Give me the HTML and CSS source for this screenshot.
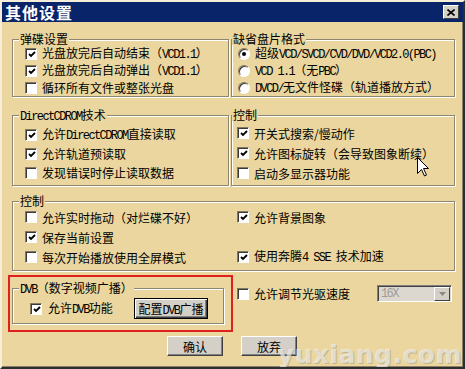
FILE: index.html
```html
<!DOCTYPE html>
<html lang="zh-CN">
<head>
  <meta charset="UTF-8">
  <title>其他设置</title>
  <link rel="stylesheet" href="styles.css">
</head>
<body>

<div class="window">
  <div class="titlebar">
    <span class="title">其他设置</span>
    <span class="close">
      <svg width="8" height="7" viewBox="0 0 8 7"><path d="M0.5 0.5 L7.5 6.5 M7.5 0.5 L0.5 6.5" stroke="#000" stroke-width="1.6"/></svg>
    </span>
  </div>

  <div class="content">
    <div class="pair">
      <fieldset class="group">
        <legend>弹碟设置</legend>
        <div class="items r17">
          <label class="item"><span class="cb on"><svg viewBox="0 0 8 7"><path d="M1 3 L3 5 L7 1"/></svg></span><span>光盘放完后自动结束（<span class="en">VCD1.1</span>）</span></label>
          <label class="item"><span class="cb on"><svg viewBox="0 0 8 7"><path d="M1 3 L3 5 L7 1"/></svg></span><span>光盘放完后自动弹出（<span class="en">VCD1.1</span>）</span></label>
          <label class="item"><span class="cb"></span><span>循环所有文件或整张光盘</span></label>
        </div>
      </fieldset>
      <fieldset class="group flush">
        <legend>缺省盘片格式</legend>
        <div class="items r17 right">
          <label class="item"><span class="rb on"></span><span>超级<span class="en">VCD/SVCD/CVD/DVD/VCD2.0(PBC)</span></span></label>
          <label class="item"><span class="rb"></span><span><span class="en">VCD 1.1</span>（无<span class="en">PBC</span>）</span></label>
          <label class="item"><span class="rb"></span><span><span class="en">DVCD/</span>无文件怪碟（轨道播放方式）</span></label>
        </div>
      </fieldset>
    </div>

    <div class="pair second">
      <fieldset class="group">
        <legend><span class="en">DirectCDROM</span>技术</legend>
        <div class="items r19">
          <label class="item"><span class="cb on"><svg viewBox="0 0 8 7"><path d="M1 3 L3 5 L7 1"/></svg></span><span>允许<span class="en">DirectCDROM</span>直接读取</span></label>
          <label class="item"><span class="cb on"><svg viewBox="0 0 8 7"><path d="M1 3 L3 5 L7 1"/></svg></span><span>允许轨道预读取</span></label>
          <label class="item"><span class="cb"></span><span>发现错误时停止读取数据</span></label>
        </div>
      </fieldset>
      <fieldset class="group flush">
        <legend>控制</legend>
        <div class="items r20 right">
          <label class="item"><span class="cb on"><svg viewBox="0 0 8 7"><path d="M1 3 L3 5 L7 1"/></svg></span><span>开关式搜索/慢动作</span></label>
          <label class="item"><span class="cb on"><svg viewBox="0 0 8 7"><path d="M1 3 L3 5 L7 1"/></svg></span><span>允许图标旋转（会导致图象断续）</span></label>
          <label class="item"><span class="cb"></span><span>启动多显示器功能</span></label>
        </div>
      </fieldset>
    </div>

    <fieldset class="group wide">
      <legend>控制</legend>
      <div class="items grid2">
        <label class="item"><span class="cb"></span><span>允许实时拖动（对烂碟不好）</span></label>
        <label class="item"><span class="cb on"><svg viewBox="0 0 8 7"><path d="M1 3 L3 5 L7 1"/></svg></span><span>允许背景图象</span></label>
        <label class="item"><span class="cb on"><svg viewBox="0 0 8 7"><path d="M1 3 L3 5 L7 1"/></svg></span><span>保存当前设置</span></label>
        <div class="item"></div>
        <label class="item"><span class="cb"></span><span>每次开始播放使用全屏模式</span></label>
        <label class="item"><span class="cb on"><svg viewBox="0 0 8 7"><path d="M1 3 L3 5 L7 1"/></svg></span><span>使用奔腾<span class="en">4 SSE </span>技术加速</span></label>
      </div>
    </fieldset>

    <div class="bottom">
      <div class="redbox">
        <fieldset class="group dvb">
          <legend><span class="en">DVB</span>（数字视频广播）</legend>
          <div class="dvb-row">
            <label class="item"><span class="cb on"><svg viewBox="0 0 8 7"><path d="M1 3 L3 5 L7 1"/></svg></span><span>允许<span class="en">DVB</span>功能</span></label>
            <button class="btn default">配置<span class="en">DVB</span>广播</button>
          </div>
        </fieldset>
      </div>
      <div class="speed">
        <label class="item"><span class="cb"></span><span>允许调节光驱速度</span></label>
        <div class="combo">
          <span class="combo-text en">16X</span>
          <span class="combo-btn">
            <svg width="7" height="4" viewBox="0 0 7 4"><path d="M0 0 H7 L3.5 4 Z" fill="#8c8880"/></svg>
          </span>
        </div>
      </div>
    </div>

    <div class="actions">
      <button class="btn">确认</button>
      <button class="btn">放弃</button>
    </div>
  </div>

  <svg class="cursor" width="13" height="21" viewBox="0 0 13 21">
    <path d="M0.5 0.5 V16.5 L4.5 12.5 L7.5 19 L9.5 18 L6.5 11.5 H11.5 Z" fill="#fff" stroke="#000" stroke-width="1"/>
  </svg>
  <div class="watermark">yuxiang.com</div>
</div>

</body>
</html>
```

FILE: styles.css
```css
body {
  margin: 0;
  background: #ead69e;
  font-family: "Noto Sans CJK SC", sans-serif;
  font-size: 12px;
  color: #000;
}
.window {
  position: relative;
  width: 465px;
  height: 369px;
  box-sizing: border-box;
  border: 2px solid;
  border-color: #f6eed8 #2e2e2e #2e2e2e #f6eed8;
  box-shadow: inset -1px -1px 0 #8c8068;
  background: #ead69e;
  overflow: hidden;
}
.titlebar {
  height: 20px;
  background: #0a246a;
  display: flex;
  align-items: center;
  justify-content: space-between;
  padding: 0 4px 0 3px;
}
.title {
  color: #fff;
  font-weight: bold;
  font-size: 16px;
  letter-spacing: 1px;
  line-height: 20px;
}
.close {
  width: 16px;
  height: 14px;
  box-sizing: border-box;
  background: #d4d0c8;
  border: 1px solid;
  border-color: #fff #404040 #404040 #fff;
  display: flex;
  align-items: center;
  justify-content: center;
}
.content {
  padding: 11px 8px 0 10px;
}
.en {
  font-family: "Liberation Mono", monospace;
  font-size: 12px;
  letter-spacing: -1.6px;
}

/* group boxes */
.pair {
  display: grid;
  grid-template-columns: 217px 224px;
  column-gap: 2px;
}
.pair.second {
  margin-top: 12px;
}
.group {
  margin: 0;
  padding: 0;
  min-width: 0;
  border: 1px solid #8f8672;
  box-shadow: inset 1px 1px 0 #fff, 1px 1px 0 #fff;
}
.group legend {
  padding: 0 1px;
  margin-left: 6px;
  height: 12px;
  line-height: 12px;
  background: #ead69e;
}
.group.flush legend {
  margin-left: 0;
}
.group.wide {
  margin-top: 9px;
}
.items {
  padding-left: 12px;
}
.items.right {
  padding-left: 5px;
}
.item {
  display: flex;
  align-items: center;
  gap: 5px;
  white-space: nowrap;
  line-height: 13px;
}
.r17 .item { height: 17px; }
.r19 { padding: 4px 0 3px 12px; }
.r19 .item { height: 19px; }
.r20 { padding-top: 2px; }
.r20 .item { height: 20px; }
.grid2 {
  display: grid;
  grid-template-columns: 212px 1fr;
  grid-auto-rows: 20px;
  padding-bottom: 3px;
}

/* checkbox / radio */
.cb {
  width: 12px;
  height: 12px;
  box-sizing: border-box;
  flex: none;
  background: #fff;
  border: 1px solid;
  border-color: #847a60 #fff #fff #847a60;
  box-shadow: inset 1px 1px 0 #3a3a3a;
  display: flex;
  align-items: center;
  justify-content: center;
}
.cb svg {
  width: 8px;
  height: 7px;
  margin: 1px 0 0 1px;
  fill: none;
  stroke: #000;
  stroke-width: 1.8;
}
.rb {
  width: 12px;
  height: 12px;
  box-sizing: border-box;
  flex: none;
  margin-left: 1px;
  border-radius: 50%;
  background: #fff;
  border: 1px solid;
  border-color: #847a60 #fff #fff #847a60;
  box-shadow: inset 1px 1px 0 #3a3a3a;
  display: flex;
  align-items: center;
  justify-content: center;
}
.rb.on::after {
  content: "";
  width: 4px;
  height: 4px;
  border-radius: 50%;
  background: #000;
}

/* bottom area */
.bottom {
  display: grid;
  grid-template-columns: 225px 1fr;
  column-gap: 4px;
  margin: 4px 0 0 -4px;
}
.redbox {
  border: 2px solid #e0201c;
  padding: 5px 0 6px 2px;
}
.group.dvb {
  width: 212px;
  box-sizing: border-box;
}
.dvb-row {
  display: flex;
  align-items: center;
  justify-content: space-between;
  padding: 4px 15px 4px 17px;
}
.dvb-row .item {
  gap: 6px;
}
.speed {
  display: flex;
  align-items: center;
  justify-content: space-between;
  height: 17px;
  margin-top: 10px;
  padding-right: 3px;
}
.combo {
  width: 75px;
  height: 17px;
  box-sizing: border-box;
  border: 1px solid;
  border-color: #808080 #fff #fff #808080;
  box-shadow: inset 1px 1px 0 #404040;
  background: #dcd8d0;
  display: flex;
  align-items: center;
  justify-content: space-between;
  padding: 1px 1px 0 3px;
}
.combo-text {
  color: #a09c94;
}
.combo-btn {
  width: 16px;
  height: 14px;
  box-sizing: border-box;
  background: #d4d0c8;
  border: 1px solid;
  border-color: #fff #404040 #404040 #fff;
  display: flex;
  align-items: center;
  justify-content: center;
}

/* buttons */
.btn {
  font-family: inherit;
  font-size: 12px;
  color: #000;
  background: #d4d0c8;
  border: 1px solid;
  border-color: #fff #404040 #404040 #fff;
  box-shadow: inset -1px -1px 0 #808080;
  padding: 0;
  height: 20px;
  width: 56px;
}
.btn.default {
  width: 74px;
  height: 21px;
  border: 1px solid #000;
  box-shadow: inset 1px 1px 0 #fff, inset -1px -1px 0 #404040, inset -2px -2px 0 #808080;
}
.actions {
  display: flex;
  justify-content: center;
  gap: 18px;
  margin-top: 4px;
  padding-right: 3px;
}

/* overlays */
.cursor {
  position: absolute;
  left: 415px;
  top: 155px;
}
.watermark {
  position: absolute;
  right: 1px;
  bottom: 0;
  line-height: 1;
  font-family: "DejaVu Sans", sans-serif;
  font-weight: bold;
  font-size: 25px;
  letter-spacing: 0.5px;
  color: rgba(240, 238, 232, 0.7);
  text-shadow: 1px 1px 0 rgba(120, 120, 120, 0.35);
}
```
